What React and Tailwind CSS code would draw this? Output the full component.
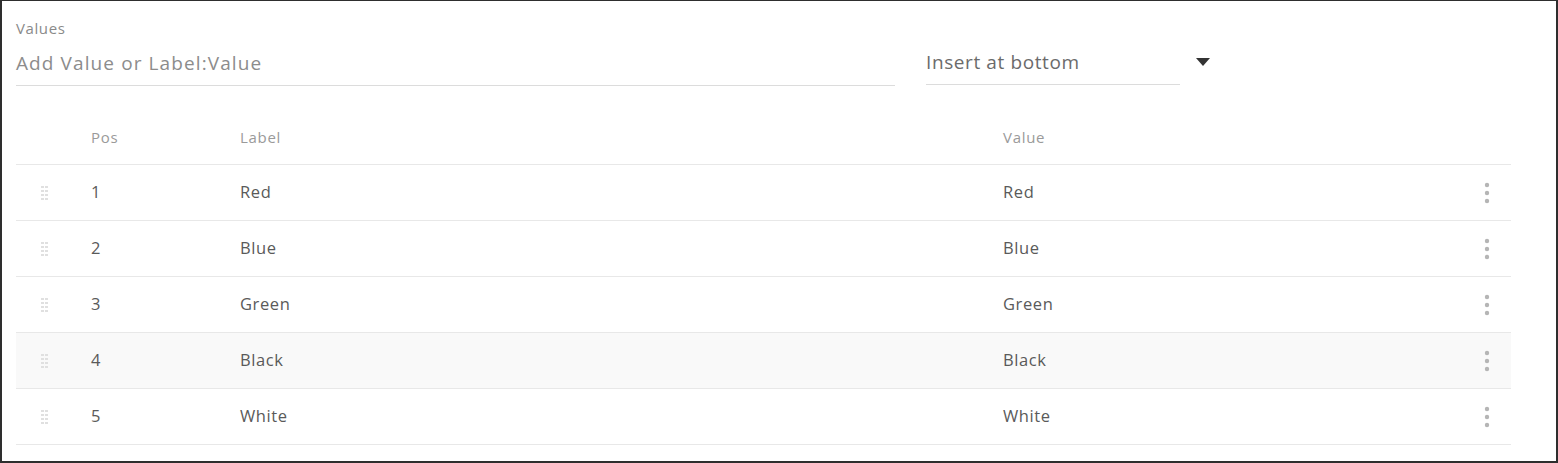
const rows = [
  { pos: 1, label: 'Red', value: 'Red' },
  { pos: 2, label: 'Blue', value: 'Blue' },
  { pos: 3, label: 'Green', value: 'Green' },
  { pos: 4, label: 'Black', value: 'Black', hover: true },
  { pos: 5, label: 'White', value: 'White' },
];

function DragHandle() {
  return (
    <svg width="8" height="16" viewBox="0 0 8 16" className="block">
      {[1, 5, 9, 13].map((y) => (
        <g key={y} fill="#e0e0e0">
          <rect x="0" y={y} width="3" height="2" />
          <rect x="4" y={y} width="3" height="2" />
        </g>
      ))}
    </svg>
  );
}

function Kebab() {
  return (
    <svg width="6" height="22" viewBox="0 0 6 22" className="block">
      <circle cx="3" cy="3" r="2.2" fill="#b5b5b5" />
      <circle cx="3" cy="11" r="2.2" fill="#b5b5b5" />
      <circle cx="3" cy="19" r="2.2" fill="#b5b5b5" />
    </svg>
  );
}

export default function App() {
  return (
    <div className="w-[1558px] h-[463px] bg-white border-[#2e2e2e] border-t border-l-2 border-r-2 border-b-2 pl-[14px] font-['Open_Sans','Lato',sans-serif] overflow-hidden">
      {/* Values input + insert position */}
      <div className="pt-[18px] text-[15px] leading-[18px] tracking-[0.6px] text-[#8a8a8a]">Values</div>
      <div className="flex items-start">
        <div className="w-[879px] h-[49px] pt-[13px] border-b border-[#dcdcdc] text-[19px] leading-[26px] tracking-[1.1px] text-[#8c8c8c]">
          Add Value or Label:Value
        </div>
        <div className="ml-[31px] w-[254px] h-[48px] pt-[12px] border-b border-[#dcdcdc] text-[19px] leading-[26px] tracking-[0.6px] text-[#6b6b6b]">
          Insert at bottom
        </div>
        <svg width="14" height="9" viewBox="0 0 14 9" className="ml-[16px] mt-[21px]">
          <path d="M0 0 L14 0 L7 8 Z" fill="#333" />
        </svg>
      </div>

      {/* Table */}
      <div className="mt-[24px] w-[1495px]">
        <div className="grid grid-cols-[75px_149px_763px_1fr_48px] h-[55px] items-center border-b border-[#e8e8e8] text-[15px] tracking-[0.7px] text-[#9a9a9a]">
          <div />
          <div>Pos</div>
          <div>Label</div>
          <div>Value</div>
          <div />
        </div>
        {rows.map((r) => (
          <div
            key={r.pos}
            className={`grid grid-cols-[75px_149px_763px_1fr_48px] h-[56px] items-center border-b border-[#e8e8e8] text-[16.5px] tracking-[0.6px] text-[#5a5a5a] ${r.hover ? 'bg-[#f9f9f9]' : ''}`}
          >
            <div className="pl-[25px]"><DragHandle /></div>
            <div>{r.pos}</div>
            <div>{r.label}</div>
            <div>{r.value}</div>
            <div className="flex justify-center"><Kebab /></div>
          </div>
        ))}
      </div>
    </div>
  );
}
